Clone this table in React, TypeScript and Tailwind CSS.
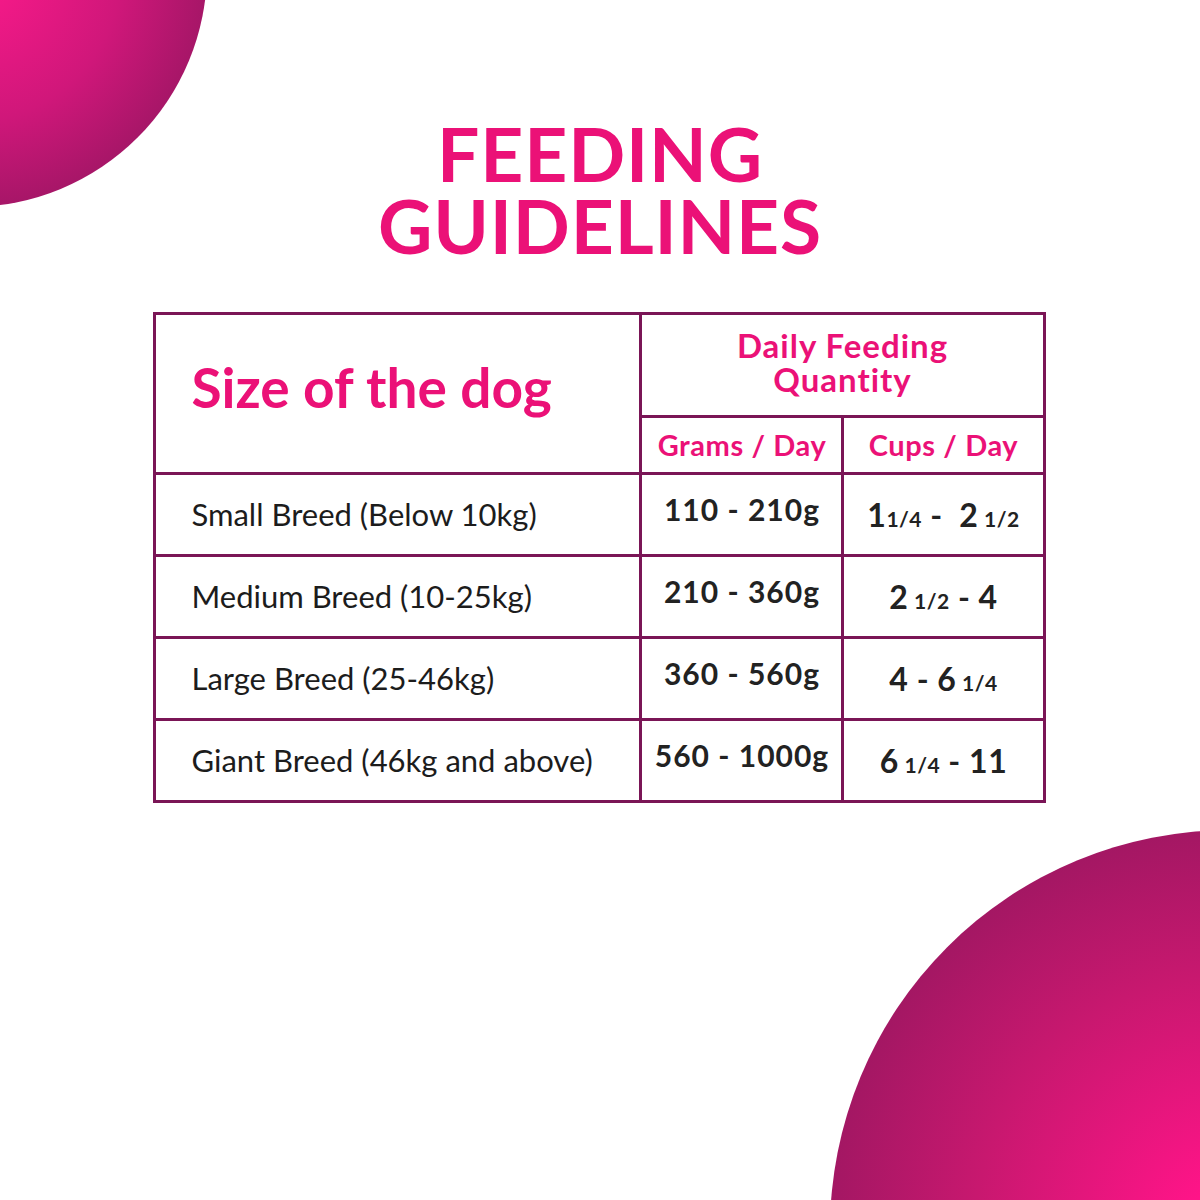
import React from "react";

const rows = [
  { size: "Small Breed (Below 10kg)", grams: "110 - 210g", cups: "a" },
  { size: "Medium Breed (10-25kg)", grams: "210 - 360g", cups: "b" },
  { size: "Large Breed (25-46kg)", grams: "360 - 560g", cups: "c" },
  { size: "Giant Breed (46kg and above)", grams: "560 - 1000g", cups: "d" },
];

function Frac({ children }: { children: React.ReactNode }) {
  return <span className="text-[21px] tracking-[0.5px]">{children}</span>;
}

function Cups({ k }: { k: string }) {
  if (k === "a")
    return (
      <span>
        1<Frac>1/4</Frac>
        <span className="whitespace-pre"> -  </span>2<Frac> 1/2</Frac>
      </span>
    );
  if (k === "b")
    return (
      <span>
        2<Frac> 1/2</Frac> - 4
      </span>
    );
  if (k === "c")
    return (
      <span>
        4 - 6<Frac> 1/4</Frac>
      </span>
    );
  return (
    <span>
      6<Frac> 1/4</Frac> - 11
    </span>
  );
}

export default function App() {
  const border = "border-[3px] border-[#7a1556]";
  return (
    <div
      className="relative w-[1200px] h-[1200px] bg-white overflow-hidden"
      style={{ fontFamily: "Lato, 'Noto Sans', sans-serif" }}
    >
      <div className="absolute left-[-267px] top-[-267px] w-[474px] h-[474px] rounded-full bg-[radial-gradient(circle,#ff1a8c_0%,#d0177a_45%,#781553_100%)]" />
      <div className="absolute left-[830px] top-[830px] w-[800px] h-[800px] rounded-full bg-[radial-gradient(circle,#ff1a8c_0%,#ff1488_8%,#c8186f_45%,#7a1656_100%)]" />

      <div className="relative flex flex-col items-center pt-[117px]">
        <h1 className="flex flex-col items-center text-[75px] font-bold text-[#eb1177] text-center tracking-[0.8px]">
          <span className="block h-[72px] leading-[72px]">FEEDING</span>
          <span className="block h-[72px] leading-[72px]">GUIDELINES</span>
        </h1>

        <table className={`mt-[51px] ml-[-1px] w-[889px] table-fixed border-collapse ${border}`}>
          <colgroup>
            <col className="w-[486px]" />
            <col className="w-[202px]" />
            <col className="w-[201px]" />
          </colgroup>
          <tbody>
            <tr className="h-[103px]">
              <td rowSpan={2} className={`${border} pl-[35px] align-middle`}>
                <span className="text-[55px] font-bold text-[#eb1177] leading-none relative top-[-6px]">
                  Size of the dog
                </span>
              </td>
              <td colSpan={2} className={`${border} text-center align-middle`}>
                <div className="text-[33px] font-bold text-[#eb1177] leading-[34px] tracking-[1px] pb-[6px]">
                  Daily Feeding
                  <br />
                  Quantity
                </div>
              </td>
            </tr>
            <tr className="h-[57px]">
              <td className={`${border} text-center text-[29px] font-bold text-[#eb1177] tracking-[0.6px]`}>
                Grams / Day
              </td>
              <td className={`${border} text-center text-[29px] font-bold text-[#eb1177] tracking-[0.6px]`}>
                Cups / Day
              </td>
            </tr>
            {rows.map((r) => (
              <tr key={r.size} className="h-[82px]">
                <td className={`${border} pl-[35px] text-[31px] text-[#1c1c1c]`}>{r.size}</td>
                <td className={`${border} text-center text-[30px] font-bold text-[#222] tracking-[1px]`}>
                  <span className="relative top-[-5px]">{r.grams}</span>
                </td>
                <td className={`${border} text-center text-[32px] font-bold text-[#222] tracking-[0.5px]`}>
                  <Cups k={r.cups} />
                </td>
              </tr>
            ))}
          </tbody>
        </table>
      </div>
    </div>
  );
}
